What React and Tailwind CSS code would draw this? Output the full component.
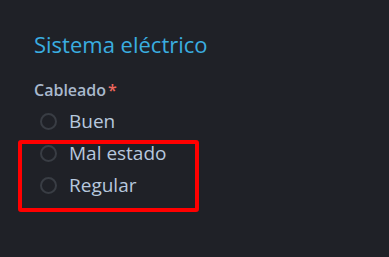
export default function App() {
  const opts = ["Buen", "Mal estado", "Regular"];
  return (
    <div className="relative w-[389px] h-[257px] bg-[#1f2127] overflow-hidden" style={{ fontFamily: '"Open Sans", "Noto Sans", sans-serif' }}>
      <div className="pt-[29px] pl-[34px] flex flex-col">
        <h2 className="text-[22px] leading-[30px] text-[#3aaee0] font-normal">Sistema eléctrico</h2>
        <div className="mt-[20px] text-[16px] leading-[22px] text-[#a9b9cd] font-semibold">
          Cableado<span className="text-[#f0685e] ml-[2px]">*</span>
        </div>
        <div className="mt-[4px] flex flex-col">
          {opts.map((o) => (
            <label key={o} className="flex items-center h-[32px] pl-[6px]">
              <span className="w-[17px] h-[17px] rounded-full border-2 border-[#393d44] shrink-0" />
              <span className="ml-[12px] text-[19px] text-[#b7c8de]">{o}</span>
            </label>
          ))}
        </div>
      </div>
      <div className="absolute left-[18px] top-[140px] w-[181px] h-[72px] border-[4px] border-[#ff0000] rounded-[3px]" />
    </div>
  );
}
